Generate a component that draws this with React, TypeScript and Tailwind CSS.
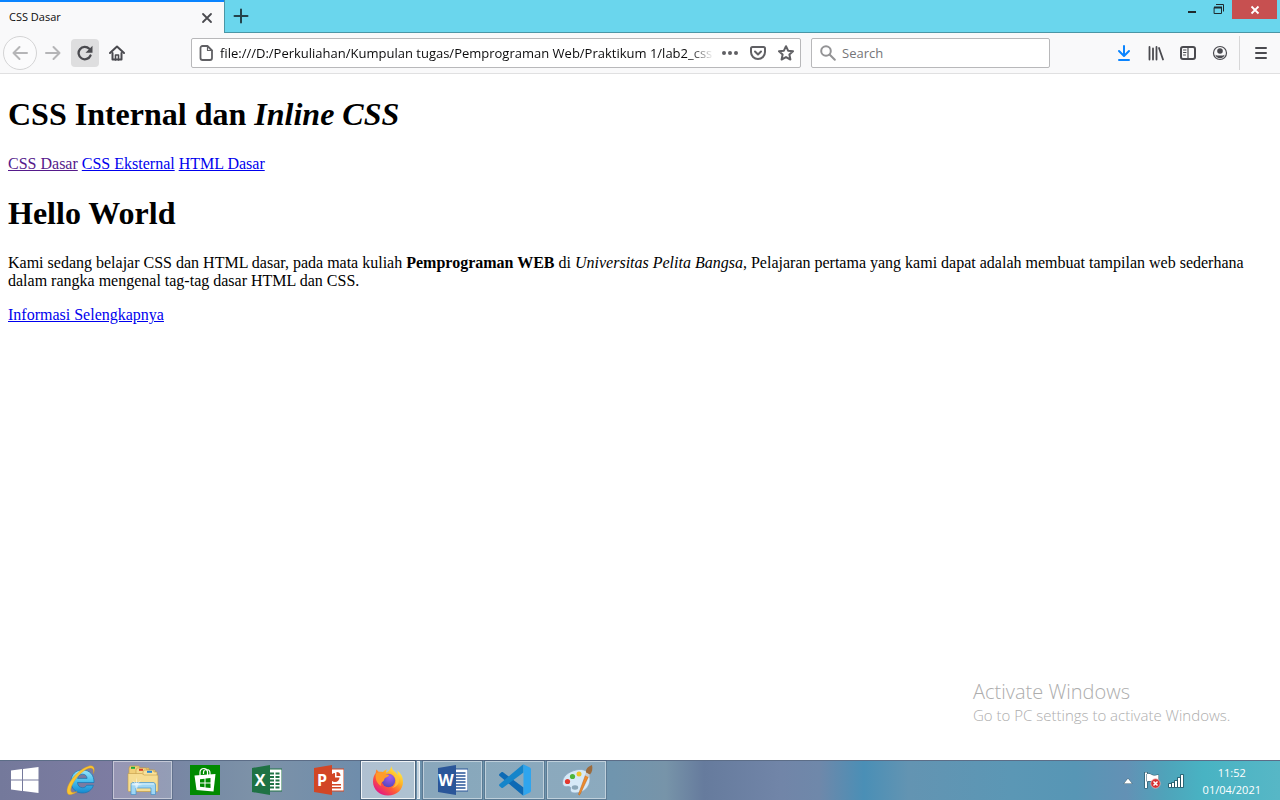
import type { ReactNode } from "react";

const PAGE_URL =
  "file:///D:/Perkuliahan/Kumpulan tugas/Pemprograman Web/Praktikum 1/lab2_css";

type IconProps = { children: ReactNode; className?: string; box?: string };

function Icon({ children, className = "size-4", box = "0 0 16 16" }: IconProps) {
  return (
    <svg
      viewBox={box}
      className={`${className} shrink-0`}
      fill="none"
      stroke="currentColor"
      strokeWidth="2"
      strokeLinecap="round"
      strokeLinejoin="round"
      aria-hidden="true"
    >
      {children}
    </svg>
  );
}

function ToolButton({ label, className = "", children }: { label: string; className?: string; children: ReactNode }) {
  return (
    <button type="button" aria-label={label} className={`flex h-7 w-8 shrink-0 items-center justify-center ${className}`}>
      {children}
    </button>
  );
}

function TabStrip() {
  return (
    <header className="flex h-[33px] items-stretch bg-[#6ad6ed]">
      <div className="flex w-56 shrink-0 items-center justify-between border-t-2 border-[#0a84ff] bg-[#f9f9fa] pr-[11px] pl-[9px]">
        <span className="text-[11px] text-[#0c0c0d]">CSS Dasar</span>
        <button type="button" aria-label="Close tab" className="flex size-3 items-center justify-center text-[#4a4a4f]">
          <Icon className="size-3" box="0 0 12 12">
            <path d="M2 2l8 8M10 2l-8 8" strokeWidth="1.8" />
          </Icon>
        </button>
      </div>
      <div className="flex flex-1 items-start justify-between border-b border-l border-[#4a96a6]">
        <button type="button" aria-label="New tab" className="flex h-8 w-8 items-center justify-center text-[#24424a]">
          <Icon>
            <path d="M8 1.5v13M1.5 8h13" />
          </Icon>
        </button>
        <div className="flex items-start pr-[3px] text-[#1f2a2e]">
          <button type="button" aria-label="Minimize" className="flex h-5 w-[26px] items-center justify-center">
            <Icon className="h-4 w-4">
              <path d="M4 10h8" strokeLinecap="butt" />
            </Icon>
          </button>
          <button type="button" aria-label="Restore" className="flex h-5 w-[27px] items-center justify-center">
            <Icon className="h-4 w-4">
              <path d="M3.5 5.5h7v6h-7z" strokeWidth="1" strokeLinejoin="miter" />
              <path d="M3 5.5h8" strokeWidth="2" strokeLinecap="butt" />
              <path d="M5 2.5h7.500v7" strokeWidth="1" strokeLinejoin="miter" strokeLinecap="butt" />
            </Icon>
          </button>
          <button type="button" aria-label="Close" className="flex h-[19px] w-[45px] items-center justify-center bg-[#c75050] text-white">
            <Icon className="h-3 w-3" box="0 0 12 12">
              <path d="M2.500 2.500l7 7M9.500 2.500l-7 7" strokeWidth="1.800" strokeLinecap="butt" />
            </Icon>
          </button>
        </div>
      </div>
    </header>
  );
}

function Toolbar() {
  return (
    <div className="flex h-[41px] items-center border-b border-[#e0e0e1] bg-[#f9f9fa] pr-[3px] pl-[3px] text-[#4a4a4f]">
      <button
        type="button"
        aria-label="Back"
        className="flex size-[34px] shrink-0 items-center justify-center rounded-full border border-[#d4d4d5] bg-[#fbfbfc] text-[#b5b5b7]"
      >
        <Icon>
          <path d="M15 8H1.500M7.500 2L1.500 8l6 6" />
        </Icon>
      </button>
      <ToolButton label="Forward" className="text-[#b5b5b7]">
        <Icon>
          <path d="M1 8h13.500M8.500 2l6 6-6 6" />
        </Icon>
      </ToolButton>
      <button type="button" aria-label="Reload" className="ml-0.5 flex size-7 shrink-0 items-center justify-center rounded-sm bg-[#dededf]">
        <Icon>
          <path d="M13.500 10.500A6.200 6.200 0 1 1 12.300 3.800" strokeWidth="2.300" />
          <path d="M15.500 .7v7H8.500z" fill="currentColor" stroke="none" />
        </Icon>
      </button>
      <ToolButton label="Home" className="ml-0.5">
        <Icon>
          <path d="M1 8l7-6.500L15 8" />
          <path d="M3.500 8v6.500h9V8" />
          <path d="M6.500 15v-5h3v5" strokeWidth="1.600" />
        </Icon>
      </ToolButton>

      <div className="ml-[58px] flex h-[30px] min-w-0 flex-1 items-center rounded-xs border border-[#b8b8ba] bg-white pr-1 pl-1.5 text-[#606064]">
        <Icon>
          <path d="M9.500 1H4.500A2 2 0 0 0 2.500 3v10a2 2 0 0 0 2 2h7.500a2 2 0 0 0 2-2V5.500z" strokeWidth="1.800" />
          <path d="M9.500 1.500v4H14" strokeWidth="1.200" />
        </Icon>
        <input
          aria-label="Address"
          defaultValue={PAGE_URL}
          className="ml-1.5 min-w-0 flex-1 bg-transparent mask-r-from-95% pt-0.5 text-[13px] text-[#0c0c0d] outline-none"
        />
        <button type="button" aria-label="Page actions" className="ml-1.5 flex w-5 justify-center">
          <Icon>
            <g fill="currentColor" stroke="none">
              <circle cx="2" cy="8" r="2" />
              <circle cx="8" cy="8" r="2" />
              <circle cx="14" cy="8" r="2" />
            </g>
          </Icon>
        </button>
        <button type="button" aria-label="Save to Pocket" className="ml-2 flex w-5 justify-center">
          <Icon>
            <path d="M2.500 2h11a1.500 1.500 0 0 1 1.500 1.500V7a7 7 0 0 1-14 0V3.500A1.500 1.500 0 0 1 2.500 2z" />
            <path d="M5 6.500l3 3 3-3" />
          </Icon>
        </button>
        <button type="button" aria-label="Bookmark this page" className="ml-2 flex w-5 justify-center">
          <Icon>
            <path d="M8 1.200l2.100 4.500 4.900.6-3.600 3.300 1 4.900L8 12.100l-4.400 2.400 1-4.900L1 6.300l4.900-.6z" />
          </Icon>
        </button>
      </div>

      <div className="ml-2.5 flex h-[30px] w-[239px] shrink-0 items-center rounded-xs border border-[#b8b8ba] bg-white px-2">
        <Icon className="size-4 text-[#939395]">
          <circle cx="6" cy="6" r="4.800" />
          <path d="M9.800 9.800l5 5" />
        </Icon>
        <input
          aria-label="Search"
          placeholder="Search"
          className="ml-1.5 min-w-0 flex-1 bg-transparent pt-0.5 text-[13px] outline-none placeholder:text-[#757578]"
        />
      </div>

      <div className="ml-[58px] flex shrink-0 items-center">
        <ToolButton label="Downloads" className="text-[#0a84ff]">
          <Icon>
            <path d="M8 1v9.500M3 6l5 5 5-5M3 15h10" />
          </Icon>
        </ToolButton>
        <ToolButton label="Library">
          <Icon>
            <path d="M1.500 2v12.500M5 3.500v11M8.500 2v12.500M11 3l4 11.500" strokeWidth="1.800" />
          </Icon>
        </ToolButton>
        <ToolButton label="Sidebars">
          <Icon>
            <rect x="1" y="2" width="14" height="12" rx="2" />
            <path d="M8 2v12" strokeWidth="1.200" />
            <path d="M3.500 5h2.500M3.500 7.500h2.500M3.500 10h2" strokeWidth="1" />
          </Icon>
        </ToolButton>
        <ToolButton label="Account">
          <Icon>
            <circle cx="8" cy="8" r="6.500" strokeWidth="1.200" />
            <circle cx="8" cy="6" r="2.800" fill="currentColor" stroke="none" />
            <path d="M3.300 9.500c1 1.400 2.700 1 4.700 1s3.700.4 4.700-1c-.5 2.600-2.500 3.800-4.700 3.800s-4.200-1.200-4.700-3.800z" fill="currentColor" stroke="none" />
          </Icon>
        </ToolButton>
        <span className="ml-[3px] h-[34px] w-px bg-[#d7d7d8]" />
        <ToolButton label="Menu" className="ml-[5px]">
          <Icon>
            <path d="M3 3h10M3 8h10M3 13h10" />
          </Icon>
        </ToolButton>
      </div>
    </div>
  );
}

function Page() {
  return (
    <main className="relative flex-1 bg-white px-2 font-['Liberation_Serif',serif] text-base leading-[18px] text-black">
      <h1 className="mt-[22px] text-[32px] leading-[37px] font-bold">
        CSS Internal dan <i>Inline CSS</i>
      </h1>
      <nav className="mt-[22px] flex gap-1">
        <a href="#css-dasar" className="text-[#551a8b] underline">CSS Dasar</a>
        <a href="#css-eksternal" className="text-[#0000ee] underline">CSS Eksternal</a>
        <a href="#html-dasar" className="text-[#0000ee] underline">HTML Dasar</a>
      </nav>
      <h1 className="mt-[22px] text-[32px] leading-[37px] font-bold">Hello World</h1>
      <p className="mt-[22px]">
        Kami sedang belajar CSS dan HTML dasar, pada mata kuliah <b>Pemprograman WEB</b> di{" "}
        <i>Universitas Pelita Bangsa</i>, Pelajaran pertama yang kami dapat adalah membuat tampilan web sederhana dalam
        rangka mengenal tag-tag dasar HTML dan CSS.
      </p>
      <p className="mt-4">
        <a href="#informasi" className="text-[#0000ee] underline">Informasi Selengkapnya</a>
      </p>
      <aside className="absolute right-[52px] bottom-[34px] w-[255px] font-['Open_Sans',sans-serif] font-light whitespace-nowrap text-[#adadad]">
        <p className="text-[20px] leading-6">Activate Windows</p>
        <p className="text-[15px] leading-[22px]">Go to PC settings to activate Windows.</p>
      </aside>
    </main>
  );
}

function WindowsLogo() {
  return (
    <svg viewBox="0 0 28 26" className="h-[26px] w-7" fill="#fff" aria-hidden="true">
      <path d="M0 3.600L11 2v10.500H0zM12 1.900L27.500 0v12.500H12zM0 13.500h11V24L0 22.400zM12 13.500h15.500V26L12 24.100z" />
    </svg>
  );
}

function ExplorerBrowserIcon() {
  return (
    <svg viewBox="0 0 30 32" className="h-8 w-[30px]" aria-hidden="true">
      <defs>
        <linearGradient id="ieBlue" x1="0" y1="0" x2="0" y2="1">
          <stop offset="0" stopColor="#9be6fb" />
          <stop offset=".5" stopColor="#45bdec" />
          <stop offset="1" stopColor="#1689cf" />
        </linearGradient>
      </defs>
      <path
        d="M28 18.500H11.500c.2 3.300 2.200 5.200 5 5.200 2 0 3.300-.8 4.200-2.400h6.700c-1.500 4.700-5.400 7.700-11 7.700C9.800 29 5 24.500 5 17.500S9.800 6 16.500 6C23.600 6 28.200 10.800 28 18.500zM11.600 14.400h9.500c-.2-2.700-2-4.200-4.600-4.200s-4.500 1.600-4.900 4.200z"
        fill="url(#ieBlue)"
        stroke="#1577b5"
        strokeWidth=".7"
      />
      <path
        d="M27.500 9.500C29.500 4 27.500.8 22.500 2.200 15.500 4.200 6.500 12.500 2.700 20.500c-3 6.500-2 11 2.500 10 2-.5 4-1.500 6-3-3 1.300-5.600 1.600-6.300-.3C3.700 24 8.500 15 15 9.200c5-4.400 9.700-6.200 11.500-4.500 1 .9 1.200 2.500 1 4.800z"
        fill="#fbc531"
        stroke="#d99a18"
        strokeWidth=".4"
      />
    </svg>
  );
}

function FolderIcon() {
  return (
    <svg viewBox="0 0 32 32" className="size-8" aria-hidden="true">
      <g stroke="#c39a45" strokeWidth=".6">
        <path d="M2 4l1-2h9l1 2h9v22H2z" fill="#f1cf78" />
        <path d="M9 6l1-2h9l1 2h8v21H9z" fill="#f5da8c" />
        <path d="M16 8l1-2h9l1 2h3v19H16z" fill="#f8e19b" />
        <path d="M1 9.500h14l2 1.500h13c.6 0 1 .4 1 1v14.500c0 .7-.4 1-1 1H2.500c-1 0-1.500-.5-1.500-1z" fill="#f6dd93" />
      </g>
      <path d="M4 2.800h4v2H4z" fill="#18a839" />
      <path d="M12 4.800h4v2h-4z" fill="#d93c24" />
      <path d="M20 6.800h5v2h-5z" fill="#2786d5" />
      <path d="M6 18.500h20c1.500 0 2.500 1 2.500 2.500v9.500H24V24H9v6.500H4V20.500c0-1.300.8-2 2-2z" fill="#9fd6f4" stroke="#4692ca" strokeWidth=".7" />
      <path d="M5 20h22" stroke="#dff3fc" strokeWidth="1" />
      <path d="M9.500 13l.8 6 4-3-3.300 4 5 1-5 .6-1.500 5-1.300-5-5-.6 5-1-3-4 3.800 3z" fill="#fff" opacity=".6" />
    </svg>
  );
}

function StoreIcon() {
  return (
    <svg viewBox="0 0 30 30" className="size-[30px]" aria-hidden="true">
      <path d="M0 0h30v30H0z" fill="#008a00" />
      <path d="M10 11V7.500C10 5 11.500 3.500 14 3.500c2 0 3 1 3.500 3V11M13.500 9V7.500c0-2 1.300-3 3-3 2 0 3.500 1.300 3.500 3.500v3" fill="none" stroke="#fff" strokeWidth="1.200" />
      <path d="M4.500 10.500L25.500 9l-2 17.500-17-1.500z" fill="#fff" />
      <path d="M10 14.300l4.500-.6v3.800H10zM15.500 13.600l5-.6v4.500h-5zM10 18.500h4.500v3.800l-4.500-.6zM15.500 18.500h5V23l-5-.6z" fill="#008a00" />
    </svg>
  );
}

function OfficeIcon({ letter, children, cover }: { letter: string; children: ReactNode; cover: string }) {
  return (
    <span className="relative flex h-[30px] w-[30px]">
      <svg viewBox="0 0 30 30" className="size-[30px]" aria-hidden="true">
        {children}
        <path d="M0 3l18-3v30L0 27z" fill={cover} />
      </svg>
      <span className="absolute inset-y-0 left-0 flex w-[17px] items-center justify-center font-['Open_Sans',sans-serif] text-base font-bold text-white">
        {letter}
      </span>
    </span>
  );
}

function FirefoxIcon() {
  return (
    <svg viewBox="0 0 32 32" className="size-8" aria-hidden="true">
      <defs>
        <linearGradient id="foxFire" x1=".85" y1=".1" x2=".2" y2=".95">
          <stop offset="0" stopColor="#fff44f" />
          <stop offset=".35" stopColor="#ffb225" />
          <stop offset=".65" stopColor="#ff5a36" />
          <stop offset="1" stopColor="#e31587" />
        </linearGradient>
        <radialGradient id="foxGlobe" cx=".6" cy=".25" r=".8">
          <stop offset="0" stopColor="#a45cf0" />
          <stop offset="1" stopColor="#5148b8" />
        </radialGradient>
      </defs>
      <path
        d="M20 .5c-1 3 .4 4.800 2 6.500 1.600 1.400 2.700 2.200 3.400 4 .5-1.500.4-3-.2-4.500 3.800 2.500 5.800 6.500 5.800 11.200C31 25.800 24.500 31.500 16 31.500S1 25.600 1 17.500c0-3.300 1-6.200 2.700-8.400l.5-3.600c1 .7 1.800 1.400 2.400 2.300 1.500-.3 3-.2 4.400.3 1.200-1.400 2.600-2.400 4.200-2.800-1 1.200-1.300 2.300-.7 3.500C16.500 7.500 19.500 4.500 20 .5z"
        fill="url(#foxFire)"
      />
      <circle cx="16.500" cy="16.500" r="6.700" fill="url(#foxGlobe)" />
      <path d="M4 9.500c3-2 6.500-1.500 9 .2 1.500.8 3 1 4.200 1.300-.6 1.800-2.200 2.200-3.700 2.700-1.800.8-.8 2.800-2.500 3.700-2 .9-2.800 2.600-1.500 4.700-4.500-2-6.800-7.500-5.500-12.600z" fill="#ff9b2b" />
      <path d="M22.500 12c2.700 3.700 2 9.500-2.500 12 5-1 7.500-4.500 7-9.500-.8-2.500-2.500-3.500-4.500-2.500z" fill="#ffc83a" opacity=".8" />
    </svg>
  );
}

function VsCodeIcon() {
  return (
    <svg viewBox="0 0 32 32" className="size-8" aria-hidden="true">
      <path d="M.4 11.800c-.5-.5-.5-1.200 0-1.700l2-1.800c.5-.4 1.100-.4 1.600 0L24.500 23.500v7.800c-.8 0-1.300-.2-1.800-.7z" fill="#0d6ab5" />
      <path d="M.4 20.200c-.5.500-.5 1.200 0 1.700l2 1.800c.5.400 1.100.4 1.600 0L24.500 8.500V.7c-.8 0-1.300.2-1.800.7z" fill="#1585ca" />
      <path d="M24.700.6l6.200 3c.7.300 1.100.9 1.100 1.700v21.400c0 .8-.4 1.400-1.100 1.700l-6.200 3c-.8.300-1.500.1-2.100-.5.9.7 1.900.1 1.900-.9V2c0-1-1-1.600-1.900-.9.600-.6 1.300-.8 2.100-.5z" fill="#2fa5ee" />
    </svg>
  );
}

function PaintIcon() {
  return (
    <svg viewBox="0 0 32 32" className="size-8" aria-hidden="true">
      <path
        d="M15 6c8-2 14 1.500 14 9 0 8-6 14-15 14-3.500 0-5-1.500-4.500-3.700.5-2-.5-3-2.500-2.700-3 .5-5.500-.5-5.500-4C1.500 12.500 7 8 15 6z"
        fill="#d6e9f7"
        stroke="#8baac4"
        strokeWidth=".8"
      />
      <ellipse cx="14" cy="23.500" rx="3.200" ry="2.200" fill="#8ba7b8" />
      <circle cx="6.500" cy="17.500" r="2.600" fill="#e3382f" />
      <circle cx="11.500" cy="12.500" r="2.600" fill="#4db53c" />
      <circle cx="18" cy="10" r="2.500" fill="#f0c32c" />
      <path d="M24.500 11l3 1.500-8.500 18c-.5 1-1.700.5-1.400-.6z" fill="#ed8b2e" stroke="#b96118" strokeWidth=".5" />
      <path d="M25 8.500l4 2-1.500 2.800-3.700-2z" fill="#c8cdd2" />
      <path d="M25 8.500c-.5-3 1.500-6 6-7.500.8 3.500.3 7-2 9.500z" fill="#9c6b3d" />
    </svg>
  );
}

function TaskButton({ label, open, children }: { label: string; open?: boolean; children: ReactNode }) {
  return (
    <button
      type="button"
      aria-label={label}
      className={
        open
          ? "flex h-[38px] w-[59px] items-center justify-center border border-white/45 bg-white/20 outline outline-[#41566d]/40"
          : "flex h-[38px] w-[59px] items-center justify-center"
      }
    >
      {children}
    </button>
  );
}

function Taskbar() {
  return (
    <footer className="flex h-10 items-stretch border-t border-[#5c6d87] bg-[linear-gradient(90deg,#74799b_0%,#7d7ca2_9%,#778ba5_16%,#7d92a8_20%,#6f8dab_28%,#6b93ac_36%,#7095ae_48%,#7794a9_52%,#667b9d_55%,#7185a8_61%,#6f88aa_64%,#4a8fb6_67.500%,#6394b2_71%,#5b97b5_79%,#5796b5_84%,#6391b5_88%,#4fa3ba_91%,#48b3c3_94%,#57b7c6_100%)] font-['Open_Sans',sans-serif] text-white">
      <button type="button" aria-label="Start" className="flex h-[38px] w-[51px] shrink-0 items-center pl-[11px]">
        <WindowsLogo />
      </button>
      <nav aria-label="Taskbar" className="flex gap-[3px]">
        <TaskButton label="Internet Explorer"><ExplorerBrowserIcon /></TaskButton>
        <TaskButton label="File Explorer" open><FolderIcon /></TaskButton>
        <TaskButton label="Store"><StoreIcon /></TaskButton>
        <TaskButton label="Excel">
          <OfficeIcon letter="X" cover="#1f7244">
            <path d="M17 4h13v22H17z" fill="#fff" stroke="#1f7244" />
            <path d="M18 7.500h4v2h-4zM23.500 7.500h4v2h-4zM18 11h4v2h-4zM23.500 11h4v2h-4zM18 14.500h4v2h-4zM23.500 14.500h4v2h-4zM18 18h4v2h-4zM23.500 18h4v2h-4zM18 21.500h4v2h-4zM23.500 21.500h4v2h-4z" fill="#1f7244" />
          </OfficeIcon>
        </TaskButton>
        <TaskButton label="PowerPoint">
          <OfficeIcon letter="P" cover="#d24625">
            <path d="M17 4h13v22H17z" fill="#fff" stroke="#d24625" />
            <path d="M21 8a4.500 4.500 0 1 0 4.500 4.500H21z" fill="#d24625" />
            <path d="M22.500 7v4h4a4 4 0 0 0-4-4zM18 19h9v1.500h-9zM18 22h9v1.500h-9z" fill="#d24625" />
          </OfficeIcon>
        </TaskButton>
        <button type="button" aria-label="Firefox" className="flex h-[38px] w-[59px] gap-0.5">
          <span className="flex h-full w-[54px] items-center justify-center border border-white/80 bg-white/45 outline outline-[#3b4d63]/60">
            <FirefoxIcon />
          </span>
          <span className="h-full w-[3px] border-y border-r border-white/70 bg-white/60" />
        </button>
        <TaskButton label="Word" open>
          <OfficeIcon letter="W" cover="#2a5699">
            <path d="M17 4h13v22H17z" fill="#fff" stroke="#2a5699" />
            <path d="M18 8h9.500M18 11h9.500M18 14h9.500M18 17h9.500M18 20h9.500M18 23h9.500" stroke="#2a5699" strokeWidth="1.300" />
          </OfficeIcon>
        </TaskButton>
        <TaskButton label="Visual Studio Code" open><VsCodeIcon /></TaskButton>
        <TaskButton label="Paint" open><PaintIcon /></TaskButton>
      </nav>
      <div className="ml-auto flex items-center pr-[19px]">
        <button type="button" aria-label="Show hidden icons" className="flex w-4 justify-center">
          <svg viewBox="0 0 10 6" className="h-1.5 w-2.5" aria-hidden="true">
            <path d="M5 .5L9 5.500H1z" fill="#fff" stroke="#34596b" strokeWidth="1" paintOrder="stroke" />
          </svg>
        </button>
        <button type="button" aria-label="Action Center" className="ml-2 flex">
          <svg viewBox="0 0 17 17" className="size-[17px]" aria-hidden="true">
            <path d="M1 .5h2V16H1z" fill="#fff" stroke="#234f60" strokeWidth="1.200" paintOrder="stroke" />
            <path d="M3 2c3-1 4.500 1.500 7 1.500 2 0 3-.5 4.500-.5v7c-3 .8-4.500 0-6-.5-2-.7-3.500-.5-5.500 0z" fill="#fff" stroke="#234f60" strokeWidth="1" paintOrder="stroke" />
            <circle cx="11.500" cy="11.500" r="4.700" fill="#d52f30" stroke="#f2c0bd" strokeWidth=".7" />
            <path d="M9.500 9.500l4 4M13.500 9.500l-4 4" stroke="#fff" strokeWidth="1.500" />
          </svg>
        </button>
        <button type="button" aria-label="Network" className="ml-[7px] flex">
          <svg viewBox="0 0 17 14" className="h-3.5 w-[17px]" aria-hidden="true">
            <path
              d="M1 10h2v3H1zM4 9h2v4H4zM7 7h2v6H7zM10 4h2v9h-2zM13 1h2v12h-2z"
              fill="#fff"
              stroke="#235463"
              strokeWidth="1.600"
              paintOrder="stroke"
            />
          </svg>
        </button>
        <time dateTime="2021-04-01T11:52" className="ml-[18px] flex flex-col items-center text-[11px] leading-[17px]">
          <span>11:52</span>
          <span>01/04/2021</span>
        </time>
      </div>
    </footer>
  );
}

export default function App() {
  return (
    <div className="flex min-h-screen flex-col font-['Open_Sans',sans-serif]">
      <TabStrip />
      <Toolbar />
      <Page />
      <Taskbar />
    </div>
  );
}
